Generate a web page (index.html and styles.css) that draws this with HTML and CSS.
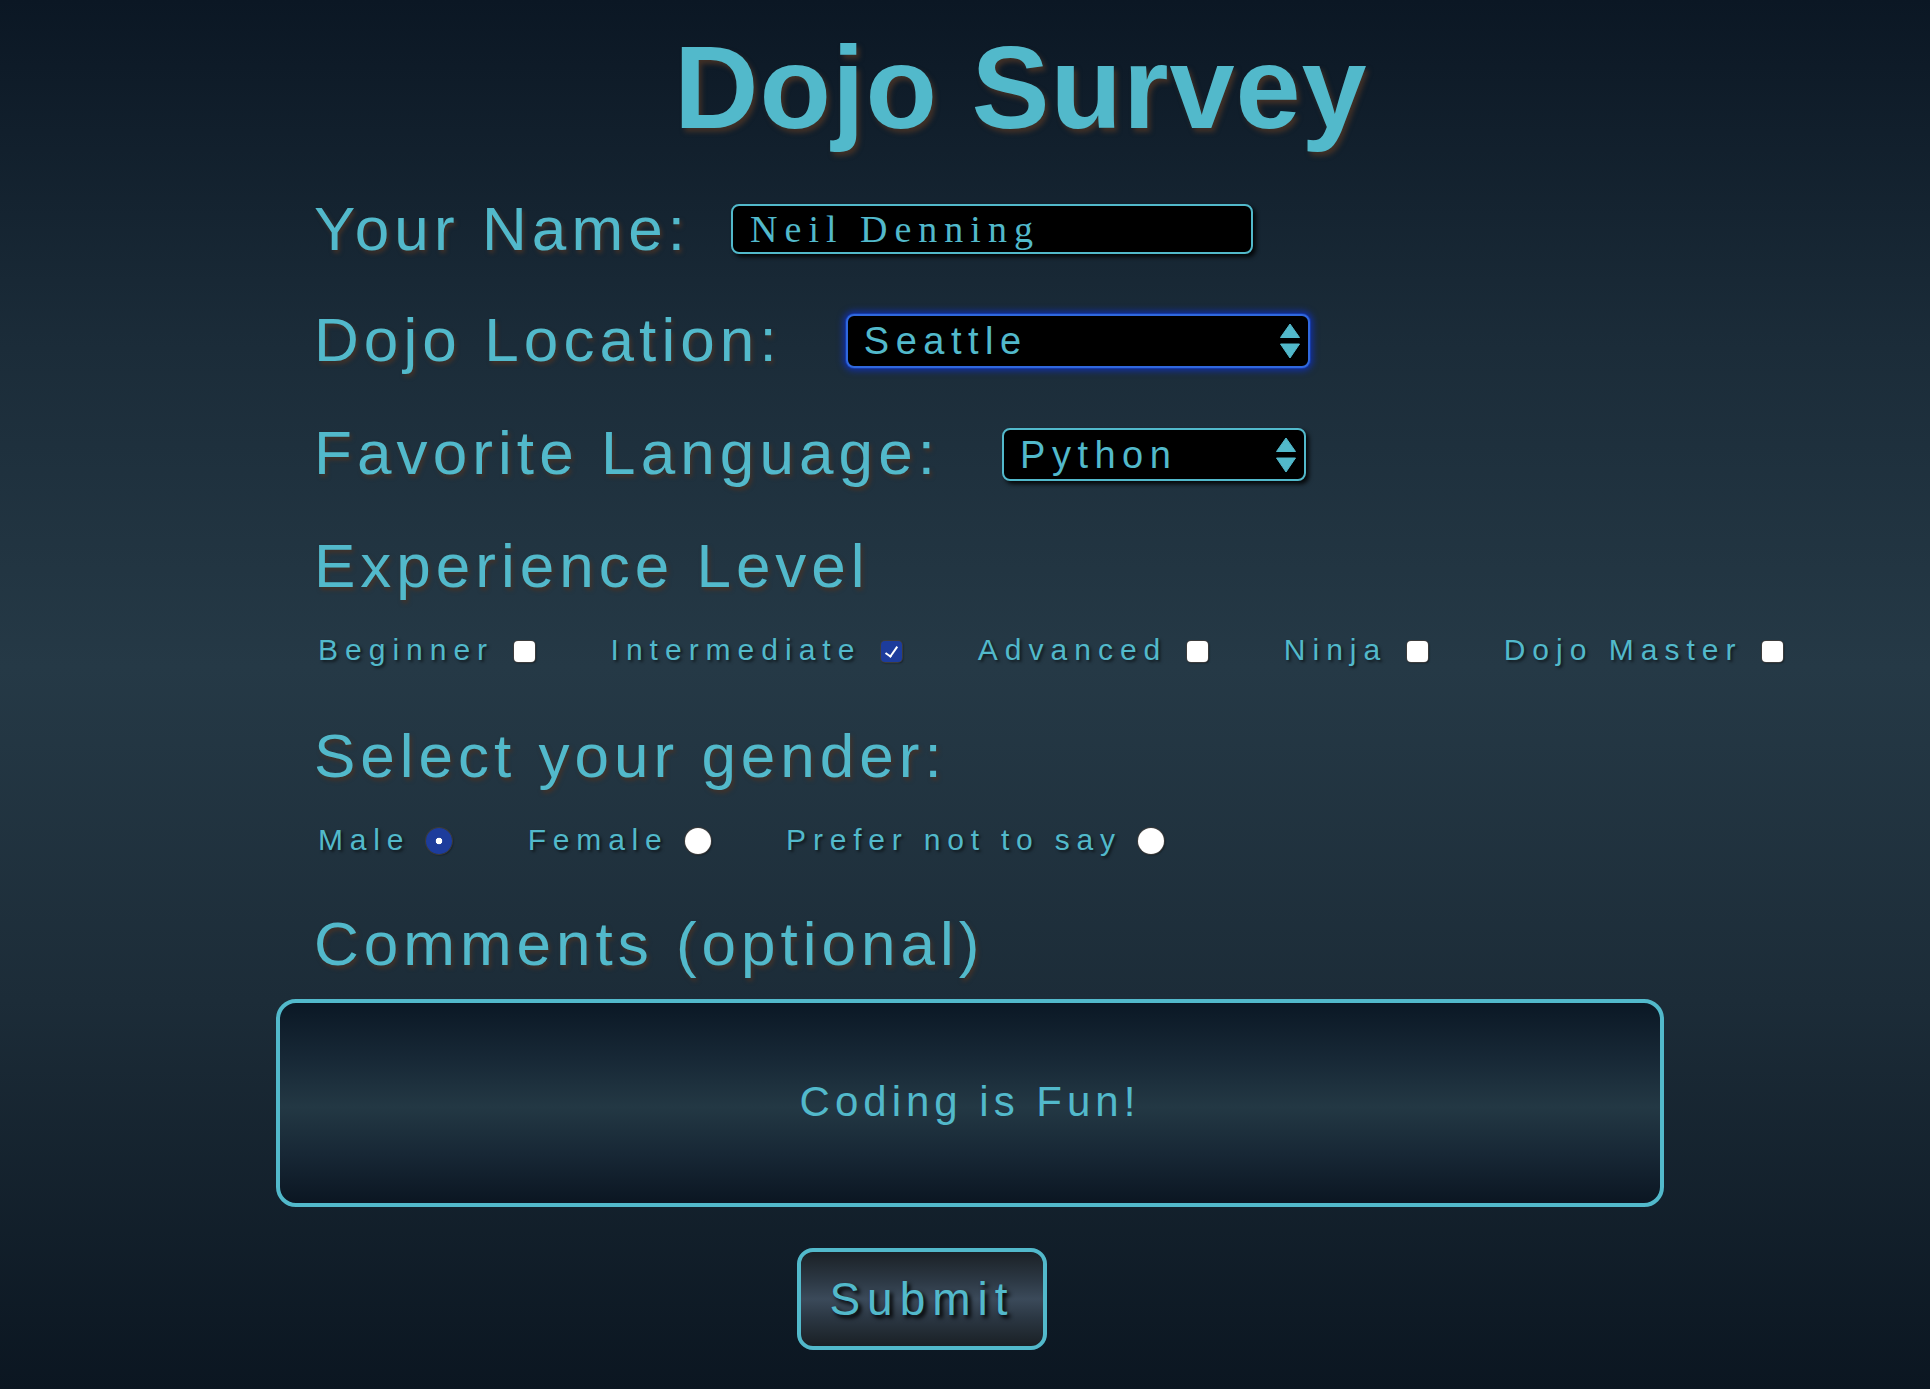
FILE: index.html
```html
<!DOCTYPE html>
<html lang="en">
<head>
<meta charset="utf-8">
<title>Dojo Survey</title>
<link rel="stylesheet" href="styles.css">
</head>
<body>
<main class="page">
  <h1 class="title">Dojo Survey</h1>
  <form class="survey">
    <div class="field field-name">
      <label class="label" for="name">Your Name:</label>
      <input class="text-input" id="name" type="text" value="Neil Denning">
    </div>
    <div class="field field-location">
      <label class="label" for="location">Dojo Location:</label>
      <span class="select-wrap wrap-location">
        <select class="select select-location" id="location">
          <option>Seattle</option>
          <option>San Jose</option>
          <option>Burbank</option>
          <option>Dallas</option>
        </select>
        <svg class="arrows" width="20" height="35" viewBox="0 0 20 35" aria-hidden="true">
          <path d="M10 0.5 L19.5 14 L0.5 14 Z" fill="#52b9cb" stroke="#52b9cb" stroke-linejoin="round" stroke-width="1"/>
          <path d="M0.5 20.5 L19.5 20.5 L10 34.5 Z" fill="#52b9cb" stroke="#52b9cb" stroke-linejoin="round" stroke-width="1"/>
        </svg>
      </span>
    </div>
    <div class="field field-language">
      <label class="label" for="language">Favorite Language:</label>
      <span class="select-wrap wrap-language">
        <select class="select select-language" id="language">
          <option>Python</option>
          <option>JavaScript</option>
          <option>Java</option>
          <option>C#</option>
        </select>
        <svg class="arrows" width="20" height="35" viewBox="0 0 20 35" aria-hidden="true">
          <path d="M10 0.5 L19.5 14 L0.5 14 Z" fill="#52b9cb" stroke="#52b9cb" stroke-linejoin="round" stroke-width="1"/>
          <path d="M0.5 20.5 L19.5 20.5 L10 34.5 Z" fill="#52b9cb" stroke="#52b9cb" stroke-linejoin="round" stroke-width="1"/>
        </svg>
      </span>
    </div>

    <h2 class="heading heading-exp">Experience Level</h2>
    <div class="options options-exp">
      <label class="option option-check">Beginner<input class="check" type="checkbox"></label>
      <label class="option option-check">Intermediate<input class="check" type="checkbox" checked></label>
      <label class="option option-check">Advanced<input class="check" type="checkbox"></label>
      <label class="option option-check">Ninja<input class="check" type="checkbox"></label>
      <label class="option option-check">Dojo Master<input class="check" type="checkbox"></label>
    </div>

    <h2 class="heading heading-gender">Select your gender:</h2>
    <div class="options options-gender">
      <label class="option option-radio">Male<input class="radio" type="radio" name="gender" checked></label>
      <label class="option option-radio">Female<input class="radio" type="radio" name="gender"></label>
      <label class="option option-radio">Prefer not to say<input class="radio" type="radio" name="gender"></label>
    </div>

    <h2 class="heading heading-comments">Comments (optional)</h2>
    <textarea class="comments" rows="3">Coding is Fun!</textarea>

    <div class="actions">
      <button class="submit" type="submit">Submit</button>
    </div>
  </form>
</main>
</body>
</html>
```

FILE: styles.css
```css
html {
  height: 100%;
}

body {
  margin: 0;
  min-height: 100%;
  background: linear-gradient(to bottom, #0b1724 0%, #1b2c39 25%, #253946 48%, #1c2c38 72%, #0b1621 100%);
  font-family: "Liberation Sans", Arial, Helvetica, sans-serif;
  color: #52b9cb;
}

.page {
  overflow: hidden;
}

.title {
  margin: 20px 0 0;
  padding-left: 674px;
  font-size: 117px;
  font-weight: bold;
  line-height: normal;
  letter-spacing: 1px;
  color: #52b9cb;
  text-shadow: 3px 4px 5px rgba(70, 50, 38, 0.9);
}

.survey {
  margin: 0;
}

.field {
  display: flex;
  align-items: center;
  margin-left: 314px;
}

.field-name {
  margin-top: 38px;
}

.field-location {
  margin-top: 40px;
}

.field-language {
  margin-top: 42px;
}

.label {
  font-size: 62px;
  line-height: normal;
  letter-spacing: 5.1px;
  text-shadow: 2px 3px 4px rgba(70, 50, 38, 0.95);
  white-space: nowrap;
}

.text-input {
  box-sizing: border-box;
  width: 522px;
  height: 50px;
  margin: 0 0 0 41px;
  padding: 0 17px;
  background: #000;
  border: 2px solid #52b9cb;
  border-radius: 8px;
  box-shadow: 3px 3px 4px rgba(0, 0, 0, 0.85);
  color: #52b9cb;
  font-family: "Liberation Serif", "Times New Roman", serif;
  font-size: 38px;
  letter-spacing: 7px;
  outline: none;
}

.select-wrap {
  position: relative;
  display: inline-flex;
}

.wrap-location {
  margin-left: 64px;
  margin-top: 2px;
}

.wrap-language {
  margin-left: 62px;
  margin-top: 4px;
}

.select {
  -webkit-appearance: none;
  appearance: none;
  box-sizing: border-box;
  margin: 0;
  padding: 0 44px 0 16px;
  background: #000;
  color: #52b9cb;
  font-family: "Liberation Sans", Arial, Helvetica, sans-serif;
  font-size: 38px;
  letter-spacing: 6.5px;
  border: 2px solid #52b9cb;
  border-radius: 8px;
  outline: none;
}

.select-location {
  width: 464px;
  height: 54px;
  border-color: #3068de;
  box-shadow: 0 0 0 1px #163aa8, 0 0 6px 3px rgba(18, 48, 168, 0.9);
}

.select-language {
  width: 304px;
  height: 53px;
  box-shadow: 3px 3px 4px rgba(0, 0, 0, 0.85);
}

.arrows {
  position: absolute;
  right: 10px;
  top: 50%;
  transform: translateY(-50%);
  pointer-events: none;
}

.heading {
  margin: 0 0 0 314px;
  font-size: 62px;
  font-weight: normal;
  line-height: normal;
  letter-spacing: 5px;
  text-shadow: 2px 3px 4px rgba(70, 50, 38, 0.95);
}

.heading-exp {
  margin-top: 42px;
}

.heading-gender {
  margin-top: 53px;
}

.heading-comments {
  margin-top: 51px;
}

.options {
  display: flex;
  align-items: center;
  gap: 75.5px;
  margin-left: 318px;
  margin-top: 32px;
}

.option {
  display: inline-flex;
  align-items: center;
  font-size: 30px;
  line-height: normal;
  letter-spacing: 7px;
  white-space: nowrap;
  text-shadow: 2px 2px 3px rgba(0, 0, 0, 0.55);
}

.option-check {
  gap: 20px;
}

.option-radio {
  gap: 16px;
  letter-spacing: 6.8px;
}

.check {
  -webkit-appearance: none;
  appearance: none;
  position: relative;
  flex: none;
  width: 21px;
  height: 21px;
  margin: 2px 0 0;
  background: #fff;
  border-radius: 4px;
  box-shadow: 0 0 0 1px #3c3c3c, 1px 1px 2px rgba(0, 0, 0, 0.6);
}

.check:checked {
  background: #1d3c9c;
}

.check:checked::after {
  content: "";
  position: absolute;
  left: 7px;
  top: 3px;
  width: 5px;
  height: 11px;
  border: solid #fff;
  border-width: 0 2px 2px 0;
  transform: rotate(35deg);
}

.radio {
  -webkit-appearance: none;
  appearance: none;
  flex: none;
  width: 26px;
  height: 26px;
  margin: 2px 0 0;
  border-radius: 50%;
  background: #fff;
  box-shadow: 0 0 0 1px #3c3c3c, 1px 1px 2px rgba(0, 0, 0, 0.6);
}

.radio:checked {
  background: radial-gradient(circle, #fff 0 3px, #1d3c9c 3.6px);
}

.comments {
  display: block;
  box-sizing: border-box;
  width: 1388px;
  height: 208px;
  margin: 20px 0 0 276px;
  padding: 75px 20px 0;
  background: linear-gradient(to bottom, #0b1825 0%, #172836 28%, #233844 52%, #172735 76%, #0b1622 100%);
  border: 4px solid #52b9cb;
  border-radius: 20px;
  color: #52b9cb;
  font-family: "Liberation Sans", Arial, Helvetica, sans-serif;
  font-size: 42px;
  line-height: 48px;
  letter-spacing: 5px;
  text-align: center;
  resize: none;
  outline: none;
  overflow: hidden;
}

.actions {
  display: flex;
  padding-left: 797px;
  margin-top: 41px;
}

.submit {
  box-sizing: border-box;
  width: 250px;
  height: 102px;
  margin: 0;
  padding: 0;
  background: linear-gradient(to bottom, #1b2126 0%, #2c3844 30%, #3b4a5a 50%, #2b3743 70%, #1a2025 100%);
  border: 4px solid #52b9cb;
  border-radius: 16px;
  color: #52b9cb;
  font-family: "Liberation Sans", Arial, Helvetica, sans-serif;
  font-size: 46px;
  line-height: normal;
  letter-spacing: 7px;
  text-shadow: 3px 3px 4px #000;
  cursor: pointer;
}
```
